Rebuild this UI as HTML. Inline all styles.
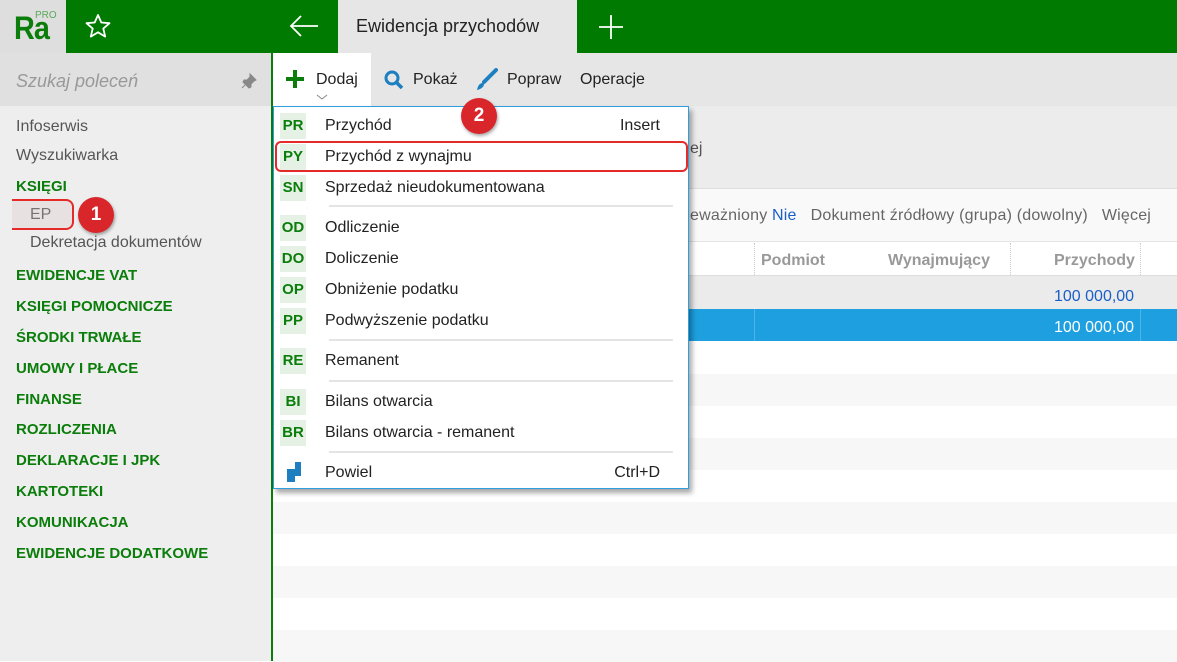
<!DOCTYPE html>
<html><head><meta charset="utf-8"><style>
*{margin:0;padding:0;box-sizing:border-box}
body{width:1177px;height:661px;overflow:hidden;position:relative;font-family:"Liberation Sans",sans-serif;background:#fff}
.a{position:absolute}
.side div{position:absolute;left:16px;font-size:16px;color:#555;white-space:nowrap}
.side .g{color:#0a7d0a;font-weight:bold;font-size:15px}
.menu{position:absolute;left:273px;top:106px;width:416px;height:383px;background:#fff;border:1px solid #2e9ee0;box-shadow:3px 4px 5px rgba(0,0,0,.35)}
.it{position:absolute;left:0;width:414px;height:30px}
.b{position:absolute;left:6px;top:2px;width:26px;height:26px;background:#e6f1e6;color:#0a7d0a;font-weight:bold;font-size:15px;text-align:center;line-height:26px}
.t{position:absolute;left:51px;top:6px;font-size:16px;color:#222}
.k{position:absolute;right:28px;top:6px;font-size:16px;color:#222}
.sep{position:absolute;left:55px;width:344px;height:2px;background:#e4e4e4}
.row{position:absolute;left:273px;width:904px;height:32px}
.badge{position:absolute;width:36px;height:36px;border-radius:50%;background:#d8262b;color:#fff;font-weight:bold;font-size:19px;text-align:center;line-height:36px;box-shadow:1px 2px 3px rgba(0,0,0,.35)}
</style></head><body>
<div class="a" style="left:0;top:0;width:1177px;height:53px;background:#007a00"></div>
<div class="a" style="left:0;top:0;width:66px;height:53px;background:#dedede"></div>
<div class="a" style="left:14px;top:10px;font-size:32px;color:#0a7d0a;letter-spacing:-1px;font-weight:bold;transform:scaleX(.9);transform-origin:left">Ra</div>
<div class="a" style="left:35px;top:10px;font-size:10px;color:#5aa85a">PRO</div>
<svg class="a" style="left:84px;top:13px" width="28" height="26" viewBox="0 0 28 26"><path d="M14 2 L17.3 9.5 L25.5 10.2 L19.3 15.6 L21.2 23.6 L14 19.3 L6.8 23.6 L8.7 15.6 L2.5 10.2 L10.7 9.5 Z" fill="none" stroke="#fff" stroke-width="1.8" stroke-linejoin="round"/></svg>
<svg class="a" style="left:288px;top:14px" width="32" height="24" viewBox="0 0 32 24"><path d="M30 12H3M13 2L3 12l10 10" fill="none" stroke="#fff" stroke-width="1.8"/></svg>
<div class="a" style="left:338px;top:0;width:239px;height:53px;background:#e6e6e6"></div>
<div class="a" style="left:356px;top:16px;font-size:18px;color:#222">Ewidencja przychodów</div>
<svg class="a" style="left:598px;top:14px" width="26" height="26"><path d="M13 1v24M1 13h24" stroke="#fff" stroke-width="1.8"/></svg>
<div class="a" style="left:0;top:53px;width:271px;height:608px;background:#eeeeee"></div>
<div class="a" style="left:0;top:53px;width:271px;height:53px;background:#e0e0e0"></div>
<div class="a" style="left:16px;top:71px;font-size:18px;color:#999;font-style:italic">Szukaj poleceń</div>
<svg class="a" style="left:240px;top:72px" width="18" height="18" viewBox="0 0 18 18"><path d="M10 2l6 6-2 1-3 3 0 3-2 1-6-6 1-2 3 0 3-3z M5 13l-3 3" fill="#888" stroke="#888" stroke-width="1"/></svg>
<div class="a" style="left:271px;top:53px;width:2px;height:608px;background:#0a7d0a"></div>
<div class="side">
<div style="top:118px">Infoserwis</div>
<div style="top:147px">Wyszukiwarka</div>
<div class="g" style="top:178px">KSIĘGI</div>
<div style="left:30px;top:206px;color:#444">EP</div>
<div style="left:30px;top:234px">Dekretacja dokumentów</div>
<div class="g" style="top:267px">EWIDENCJE VAT</div>
<div class="g" style="top:298px">KSIĘGI POMOCNICZE</div>
<div class="g" style="top:329px">ŚRODKI TRWAŁE</div>
<div class="g" style="top:360px">UMOWY I PŁACE</div>
<div class="g" style="top:391px">FINANSE</div>
<div class="g" style="top:421px">ROZLICZENIA</div>
<div class="g" style="top:452px">DEKLARACJE I JPK</div>
<div class="g" style="top:483px">KARTOTEKI</div>
<div class="g" style="top:514px">KOMUNIKACJA</div>
<div class="g" style="top:545px">EWIDENCJE DODATKOWE</div>
</div>
<div class="a" style="left:12px;top:199px;width:62px;height:31px;border:2px solid #e52a2a;border-left:none;border-radius:0 8px 8px 0;background:rgba(220,200,200,.35)"></div>
<div class="badge" style="left:78px;top:197px">1</div>
<div class="a" style="left:273px;top:53px;width:904px;height:53px;background:#e6e6e6"></div>
<div class="a" style="left:273px;top:53px;width:98px;height:53px;background:#fff"></div>
<svg class="a" style="left:286px;top:70px" width="18" height="18"><path d="M9 0v18M0 9h18" stroke="#0a7d0a" stroke-width="4"/></svg>
<div class="a" style="left:316px;top:71px;font-size:16px;color:#222">Dodaj</div>
<svg class="a" style="left:316px;top:94px" width="12" height="6"><path d="M1 1l5 4 5-4" fill="none" stroke="#888"/></svg>
<svg class="a" style="left:383px;top:69px" width="22" height="22" viewBox="0 0 22 22"><circle cx="9" cy="9" r="6" fill="none" stroke="#1e7fc0" stroke-width="3"/><path d="M13 13l6 6" stroke="#1e7fc0" stroke-width="3.5"/></svg>
<div class="a" style="left:413px;top:71px;font-size:16px;color:#222">Pokaż</div>
<svg class="a" style="left:474px;top:68px" width="24" height="24" viewBox="0 0 24 24"><path d="M22 2L10 14" stroke="#1e7fc0" stroke-width="4" stroke-linecap="round"/><path d="M9 15c-3 0-5 2-6 7 4-1 7-3 7-6z" fill="#1e7fc0"/></svg>
<div class="a" style="left:507px;top:71px;font-size:16px;color:#222">Popraw</div>
<div class="a" style="left:580px;top:71px;font-size:16px;color:#222">Operacje</div>
<div class="a" style="left:273px;top:106px;width:904px;height:83px;background:#ececec"></div>
<div class="a" style="left:690px;top:140px;font-size:16px;color:#555">ej</div>
<div class="a" style="left:273px;top:188px;width:904px;height:1px;background:#ddd"></div>
<div class="a" style="left:273px;top:189px;width:904px;height:52px;background:#f9f9f9"></div>
<div class="a" style="left:690px;top:207px;font-size:16px;color:#666;white-space:nowrap;letter-spacing:.2px">eważniony <span style="color:#1a5fc8">Nie</span>&nbsp;&nbsp; Dokument źródłowy (grupa) (dowolny) &nbsp; Więcej</div>
<div class="a" style="left:273px;top:241px;width:904px;height:1px;background:#e4e4e4"></div>
<div class="a" style="left:754px;top:243px;height:32px;border-left:1px dotted #ccc"></div>
<div class="a" style="left:1010px;top:243px;height:32px;border-left:1px dotted #ccc"></div>
<div class="a" style="left:1140px;top:243px;height:32px;border-left:1px dotted #ccc"></div>
<div class="a" style="left:761px;top:252px;font-size:16px;color:#999;font-weight:bold">Podmiot</div>
<div class="a" style="left:888px;top:252px;font-size:16px;color:#999;font-weight:bold">Wynajmujący</div>
<div class="a" style="left:1054px;top:252px;font-size:16px;color:#999;font-weight:bold">Przychody</div>
<div class="row" style="top:275px;height:34px;background:#ebebeb;border-top:1px solid #ddd"></div>
<div class="a" style="left:1054px;top:288px;font-size:16px;color:#1a5fc8">100 000,00</div>
<div class="row" style="top:309px;background:#1ea0e0"></div>
<div class="a" style="left:754px;top:309px;width:1px;height:32px;background:#4bb4e8"></div>
<div class="a" style="left:1140px;top:309px;width:1px;height:32px;background:#4bb4e8"></div>
<div class="a" style="left:1054px;top:319px;font-size:16px;color:#fff">100 000,00</div>
<div class="row" style="top:374px;background:#f7f7f7"></div>
<div class="row" style="top:438px;background:#f7f7f7"></div>
<div class="row" style="top:502px;background:#f7f7f7"></div>
<div class="row" style="top:566px;background:#f7f7f7"></div>
<div class="row" style="top:630px;background:#f7f7f7"></div>
<div class="menu">
<div class="it" style="top:4px"><div class="b">PR</div><div class="t">Przychód</div><div class="k">Insert</div></div>
<div class="it" style="top:35px"><div class="b">PY</div><div class="t">Przychód z wynajmu</div></div>
<div class="it" style="top:66px"><div class="b">SN</div><div class="t">Sprzedaż nieudokumentowana</div></div>
<div class="sep" style="top:98px"></div>
<div class="it" style="top:106px"><div class="b">OD</div><div class="t">Odliczenie</div></div>
<div class="it" style="top:137px"><div class="b">DO</div><div class="t">Doliczenie</div></div>
<div class="it" style="top:168px"><div class="b">OP</div><div class="t">Obniżenie podatku</div></div>
<div class="it" style="top:199px"><div class="b">PP</div><div class="t">Podwyższenie podatku</div></div>
<div class="sep" style="top:232px"></div>
<div class="it" style="top:239px"><div class="b">RE</div><div class="t">Remanent</div></div>
<div class="sep" style="top:273px"></div>
<div class="it" style="top:280px"><div class="b">BI</div><div class="t">Bilans otwarcia</div></div>
<div class="it" style="top:311px"><div class="b">BR</div><div class="t">Bilans otwarcia - remanent</div></div>
<div class="sep" style="top:344px"></div>
<div class="it" style="top:351px"><svg class="a" style="left:13px;top:4px" width="20" height="20"><rect x="0" y="7" width="8" height="13" fill="#1e7fc0"/><rect x="8" y="0" width="6" height="14" fill="#1e7fc0"/></svg><div class="t">Powiel</div><div class="k">Ctrl+D</div></div>
</div>
<div class="a" style="left:275px;top:141px;width:413px;height:31px;border:2px solid #e52a2a;border-radius:6px"></div>
<div class="badge" style="left:461px;top:98px">2</div>
</body></html>
